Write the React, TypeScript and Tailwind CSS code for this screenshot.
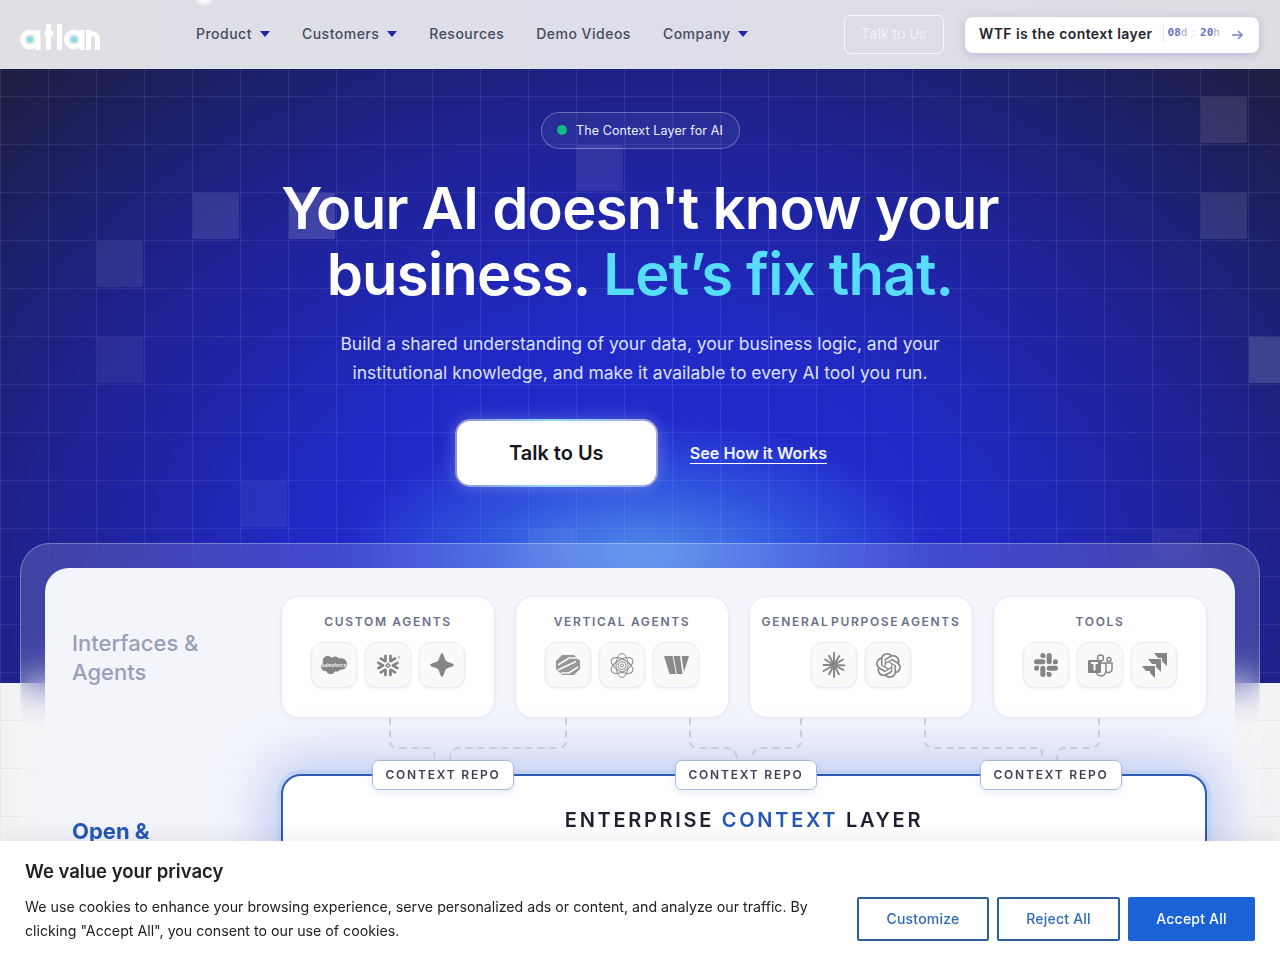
import React from "react";
import { SiOpenai, SiSlack, SiSnowflake, SiSalesforce } from "react-icons/si";

const Caret = () => (
  <svg width="10" height="6" viewBox="0 0 10 6" className="ml-2">
    <path d="M0 0h10L5 6z" fill="#1f23a5" />
  </svg>
);

const Logo = () => (
  <svg width="80" height="26" viewBox="0 0 80 26" fill="none">
    <g stroke="#fff" strokeWidth="5">
      <circle cx="10" cy="15.500" r="7.500" />
      <path d="M18 6V26" />
      <path d="M28.500 0V26M24.500 9h9" />
      <path d="M39.500 0V26" />
      <circle cx="54" cy="15.500" r="7.500" />
      <path d="M62 6V26" />
      <path d="M68.500 26V6M68.500 15c0-7 9-7 9 0V26" />
    </g>
    <circle cx="10" cy="15.500" r="3" fill="#7fe0ea" />
    <circle cx="54" cy="15.500" r="3" fill="#7fe0ea" />
  </svg>
);

const Tile = ({ children }: { children: React.ReactNode }) => (
  <div className="flex h-[46px] w-[46px] items-center justify-center rounded-[12px] border border-[#ebebf3] bg-[#fafafa] text-[#8a8a8a] shadow-[0_1px_3px_rgba(40,40,90,0.08)]">
    {children}
  </div>
);

const Sales = () => (
  <div className="relative flex items-center justify-center">
    <SiSalesforce size={26} color="#858585" />
    <span className="absolute text-[5px] font-medium leading-none text-white">salesforce</span>
  </div>
);

const Star4 = () => (
  <svg width="24" height="24" viewBox="0 0 24 24" fill="#858585">
    <path d="M12 0C14 1 14.500 6 16 8C18 9.500 23 10 24 12C23 14 18 14.500 16 16C14.500 18 14 23 12 24C10 23 9.500 18 8 16C6 14.500 1 14 0 12C1 10 6 9.500 8 8C9.500 6 10 1 12 0z" />
  </svg>
);

const Hex = () => (
  <svg width="24" height="20" viewBox="0 0 24 20">
    <path d="M6 0h12l6 6v8l-6 6H6l-6-6V6z" fill="#979797" />
    <path d="M2 10 13 3h9M2 15 20 6.500M5 18h8l9-6" fill="none" stroke="#fafafa" strokeWidth="1.600" />
  </svg>
);

const Atom = () => (
  <svg width="24" height="25" viewBox="-12 -12.500 24 25" fill="none" stroke="#8a8a8a" strokeWidth="1">
    <ellipse rx="6" ry="12" />
    <ellipse rx="6" ry="12" transform="rotate(60)" />
    <ellipse rx="6" ry="12" transform="rotate(-60)" />
    <circle r="4" />
    <circle r="1.500" />
  </svg>
);

const W = () => (
  <svg width="25" height="18" viewBox="0 0 25 18" fill="#8a8a8a">
    <path d="M0 0h8.500l3.500 18H5.500zM9.500 0h6.500l2.500 18h-5.500zM17.500 0H25l-5 16z" />
  </svg>
);

const Burst = () => (
  <svg width="26" height="26" viewBox="-13 -13 26 26" stroke="#858585" strokeWidth="1.900" strokeLinecap="round">
    {[0, 30, 58, 92, 118, 152, 180, 208, 240, 270, 302, 332].map((a) => (
      <path key={a} d={a % 60 === 0 ? "M0 0V-12" : "M0 0V-10.500"} transform={`rotate(${a})`} />
    ))}
  </svg>
);

const Teams = () => (
  <svg width="25" height="23" viewBox="0 0 25 23" fill="none" stroke="#858585" strokeWidth="1.500">
    <circle cx="12.500" cy="4" r="3" />
    <circle cx="21" cy="5.500" r="2" />
    <path d="M9 9h9v8a5 5 0 0 1-10 0" />
    <path d="M18 9h6v6a3.500 3.500 0 0 1-6 2.500" />
    <rect x="0" y="6" width="13" height="13" rx="1" fill="#858585" stroke="none" />
    <path d="M3 9h7M6.500 9v7.500" stroke="#fafafa" strokeWidth="2" />
  </svg>
);

const Jira = () => (
  <svg width="25" height="25" viewBox="0 0 25 25" fill="#858585">
    <path d="M12 0H25V13L20 8V5H16zM6 6H19V19L14 14V11H10zM0 13H13V25L8 20V18H4z" />
  </svg>
);

const Cards = [
  { t: "CUSTOM AGENTS", w: "w-[214px]", s: "", i: [<Sales key="a" />, <SiSnowflake key="b" size={23} color="#858585" />, <Star4 key="c" />] },
  { t: "VERTICAL AGENTS", w: "w-[214px]", s: "", i: [<Hex key="a" />, <Atom key="b" />, <W key="c" />] },
  { t: "GENERAL PURPOSE AGENTS", w: "w-[224px]", s: "[word-spacing:-3px]", i: [<Burst key="a" />, <SiOpenai key="b" size={25} color="#858585" />] },
  { t: "TOOLS", w: "w-[214px]", s: "", i: [<SiSlack key="a" size={24} color="#858585" />, <Teams key="b" />, <Jira key="c" />] },
];

const Repo = ({ className }: { className: string }) => (
  <div className={`absolute top-[-16px] flex h-[30px] items-center justify-center rounded-[7px] border border-[#a9bbdc] bg-white text-[12px] font-semibold tracking-[0.15em] text-[#3f4254] shadow-[0_3px_8px_rgba(70,100,200,0.12)] ${className}`}>
    CONTEXT REPO
  </div>
);

export default function App() {
  return (
    <div className="relative h-[960px] overflow-hidden bg-[#f3f3f5] font-['Inter',sans-serif]">
      {/* lower page grid */}
      <div className="absolute inset-x-0 top-[683px] h-[277px] bg-[linear-gradient(#e6e6ea_1px,transparent_1px),linear-gradient(90deg,#ececf0_1px,transparent_1px)] bg-[size:48px_48px] bg-[position:0_37px]" />

      {/* hero background */}
      <div className="absolute inset-x-0 top-[69px] h-[614px] overflow-hidden bg-[radial-gradient(ellipse_300px_140px_at_640px_490px,rgba(85,150,235,0.9),rgba(60,120,235,0.5)_55%,transparent),radial-gradient(ellipse_980px_760px_at_50%_85%,#2330dc_0,#2029c4_35%,#1e2392_62%,#1c1d33_100%)]">
        <div className="absolute inset-0 bg-[linear-gradient(rgba(255,255,255,0.075)_1px,transparent_1px),linear-gradient(90deg,rgba(255,255,255,0.075)_1px,transparent_1px)] bg-[size:48px_48px] bg-[position:0_27px]" />
        <div className="absolute left-[1201px] top-[28px] h-[46px] w-[46px] bg-white/10" />
        <div className="absolute left-[193px] top-[124px] h-[46px] w-[46px] bg-white/10" />
        <div className="absolute left-[289px] top-[124px] h-[46px] w-[46px] bg-white/15" />
        <div className="absolute left-[577px] top-[76px] h-[46px] w-[46px] bg-white/8" />
        <div className="absolute left-[97px] top-[172px] h-[46px] w-[46px] bg-white/8" />
        <div className="absolute left-[1201px] top-[124px] h-[46px] w-[46px] bg-white/10" />
        <div className="absolute left-[1249px] top-[268px] h-[46px] w-[46px] bg-white/15" />
        <div className="absolute left-[97px] top-[268px] h-[46px] w-[46px] bg-white/5" />
        <div className="absolute left-[241px] top-[412px] h-[46px] w-[46px] bg-white/5" />
        <div className="absolute left-[529px] top-[460px] h-[46px] w-[46px] bg-white/5" />
        <div className="absolute left-[1153px] top-[460px] h-[46px] w-[46px] bg-white/5" />
      </div>

      {/* header */}
      <header className="relative flex h-[69px] items-center bg-[linear-gradient(90deg,#dfdfe4,#dddeea_50%,#dddde2)] pl-5 pr-[21px]">
        <div className="absolute left-[198px] top-[-4px] h-2 w-3 rounded-full bg-white blur-[2px]" />
        <div className="pt-[4px]"><Logo /></div>
        <nav className="ml-[96px] flex -translate-y-px items-center gap-8 text-[14px] font-medium tracking-[0.035em] text-[#474b5c]">
          <span className="flex items-center">Product<Caret /></span>
          <span className="flex items-center">Customers<Caret /></span>
          <span>Resources</span>
          <span>Demo Videos</span>
          <span className="flex items-center">Company<Caret /></span>
        </nav>
        <div className="ml-auto flex items-center gap-[21px]">
          <div className="flex h-[39px] w-[100px] items-center justify-center rounded-[6px] border border-white/80 font-['Roboto',sans-serif] text-[15px] text-white/60">
            Talk to Us
          </div>
          <div className="flex h-[36px] w-[294px] items-center rounded-[8px] bg-white pl-[14px] shadow-[0_2px_8px_rgba(80,80,170,0.25)]">
            <span className="-translate-y-px text-[14px] font-semibold tracking-[0.03em] text-[#24252d]">WTF is the context layer</span>
            <span className="ml-[10px] flex -translate-y-px items-center border-l border-[#e2e3f0] pl-1 font-['DejaVu_Sans_Mono',monospace] text-[11px] text-[#a6a8da]">
              <b className="text-[#6a6fc4]">08</b>d<span className="mx-[3px] text-[#dcdcee]">:</span><b className="text-[#6a6fc4]">20</b>h
            </span>
            <svg width="12" height="10" viewBox="0 0 12 10" fill="none" stroke="#8082c8" strokeWidth="1.500" className="ml-[11px]">
              <path d="M1 5h10M7 1l4 4-4 4" />
            </svg>
          </div>
        </div>
      </header>

      {/* hero content */}
      <main className="relative flex flex-col items-center">
        <div className="mt-[43px] flex h-[37px] w-[199px] items-center justify-center rounded-full border border-white/30 bg-white/5 pb-px text-[12.500px] tracking-[0.01em] text-[#eef0fb]">
          <span className="mr-[9px] h-[10px] w-[10px] rounded-full bg-[#10b981]" />
          <span className="translate-y-px">The Context Layer for AI</span>
        </div>
        <h1 className="mt-[26px] text-center text-[58px] font-semibold leading-[66px] tracking-[-0.013em] text-white">
          Your AI doesn't know your
          <br />
          business. <span className="text-[#58dcfb]">Let’s fix that.</span>
        </h1>
        <p className="mt-[22px] text-center text-[17.500px] leading-[29px] text-[#dde1f8]">
          Build a shared understanding of your data, your business logic, and your
          <br />
          institutional knowledge, and make it available to every AI tool you run.
        </p>
        <div className="ml-[2px] mt-[32px] flex items-center">
          <div className="h-[68px] w-[203px] rounded-[15px] bg-[linear-gradient(90deg,#8e90c4,#8fdcff_48%,#a8a4d8)] p-[2px] shadow-[0_0_16px_rgba(255,255,255,0.25)]">
            <div className="flex h-full items-center justify-center rounded-[13px] bg-white text-[20px] font-semibold text-[#15151c]">
              Talk to Us
            </div>
          </div>
          <div className="ml-[32px] border-b border-white text-[16.200px] font-semibold leading-[20px] text-[#f1f3fd]">See How it Works</div>
        </div>

        {/* diagram */}
        <section className="mt-[56px] h-[500px] w-[1240px] rounded-[30px] border border-white/30 bg-white/15 px-6 pt-6 backdrop-blur-[20px]">
          <div className="relative grid h-[470px] grid-cols-[209px_926px] grid-rows-[206px_auto] rounded-[24px] bg-[#f3f5fb] pl-[27px]">
            <div className="pt-[61px] text-[22px] font-medium leading-[29px] text-[#9a9fb8]">
              Interfaces &amp;
              <br />
              Agents
            </div>
            <div className="flex gap-5 pt-7">
              {Cards.map((c) => (
                <div key={c.t} className={`${c.w} flex h-[122px] flex-col items-center rounded-[18px] border border-[#e8eaf6] bg-white pt-[17px] shadow-[0_1px_3px_rgba(70,70,150,0.06)]`}>
                  <div className={`whitespace-nowrap text-[12px] font-semibold leading-[15px] tracking-[0.14em] text-[#6b6f8a] ${c.s}`}>{c.t}</div>
                  <div className="mt-[13px] flex gap-[8px]">
                    {c.i.map((ic, j) => (
                      <Tile key={j}>{ic}</Tile>
                    ))}
                  </div>
                </div>
              ))}
            </div>
            <div className="pt-[43px] text-[22px] font-bold leading-[29px] text-[#2458b8]">Open &amp;</div>
            <div className="relative h-[260px] rounded-[20px] border-2 border-[#2c5cb6] bg-white text-center shadow-[0_0_0_4px_#c4d3f3,0_0_50px_14px_rgba(110,140,235,0.4)]">
              <Repo className="left-[89px] w-[142px]" />
              <Repo className="left-[392px] w-[142px]" />
              <Repo className="left-[697px] w-[142px]" />
              <div className="pt-[31px] text-[20px] font-semibold leading-[26px] tracking-[0.135em] text-[#1e2130]">
                ENTERPRISE <span className="text-[#2458b8]">CONTEXT</span> LAYER
              </div>
            </div>
            {/* dashed connectors */}
            <svg className="absolute left-0 top-0" width="1190" height="210" fill="none" stroke="#c8ccdf" strokeWidth="2" strokeDasharray="7 5">
              <path d="M345 150v22q0 8 8 8h28q9 0 9 12" />
              <path d="M521 150v22q0 8-8 8H414q-9 0-9 12" />
              <path d="M645 150v22q0 8 8 8h26q13 0 13 12" />
              <path d="M756 150v22q0 8-8 8h-32q-9 0-9 12" />
              <path d="M880 150v22q0 8 8 8h108q1 0 1 12" />
              <path d="M1054 150v22q0 8-8 8h-26q-8 0-8 12" />
            </svg>
          </div>
        </section>
      </main>

      {/* cookie banner */}
      <aside className="absolute inset-x-0 bottom-0 flex h-[119px] items-end justify-between bg-white pl-[25px] pr-[25px] shadow-[0_-8px_16px_rgba(0,0,0,0.05)]">
        <div className="w-[800px] pb-[17px]">
          <div className="mb-[12px] text-[18.500px] font-semibold leading-[24px] text-[#212121]">We value your privacy</div>
          <div className="text-[14.200px] leading-[24px] text-[#212121]">
            We use cookies to enhance your browsing experience, serve personalized ads or content, and analyze our traffic. By clicking "Accept All", you consent to our use of cookies.
          </div>
        </div>
        <div className="flex gap-2 pb-[19px] text-[14px] font-medium tracking-[0.015em]">
          <div className="flex h-[44px] w-[132px] items-center justify-center rounded-[2px] border-2 border-[#2c6199] bg-white pb-px text-[#2e6ab8]">Customize</div>
          <div className="flex h-[44px] w-[123px] items-center justify-center rounded-[2px] border-2 border-[#2c6199] bg-white pb-px text-[#2e6ab8]">Reject All</div>
          <div className="flex h-[44px] w-[127px] items-center justify-center rounded-[2px] bg-[#1a62d6] pb-px text-white">Accept All</div>
        </div>
      </aside>
    </div>
  );
}
